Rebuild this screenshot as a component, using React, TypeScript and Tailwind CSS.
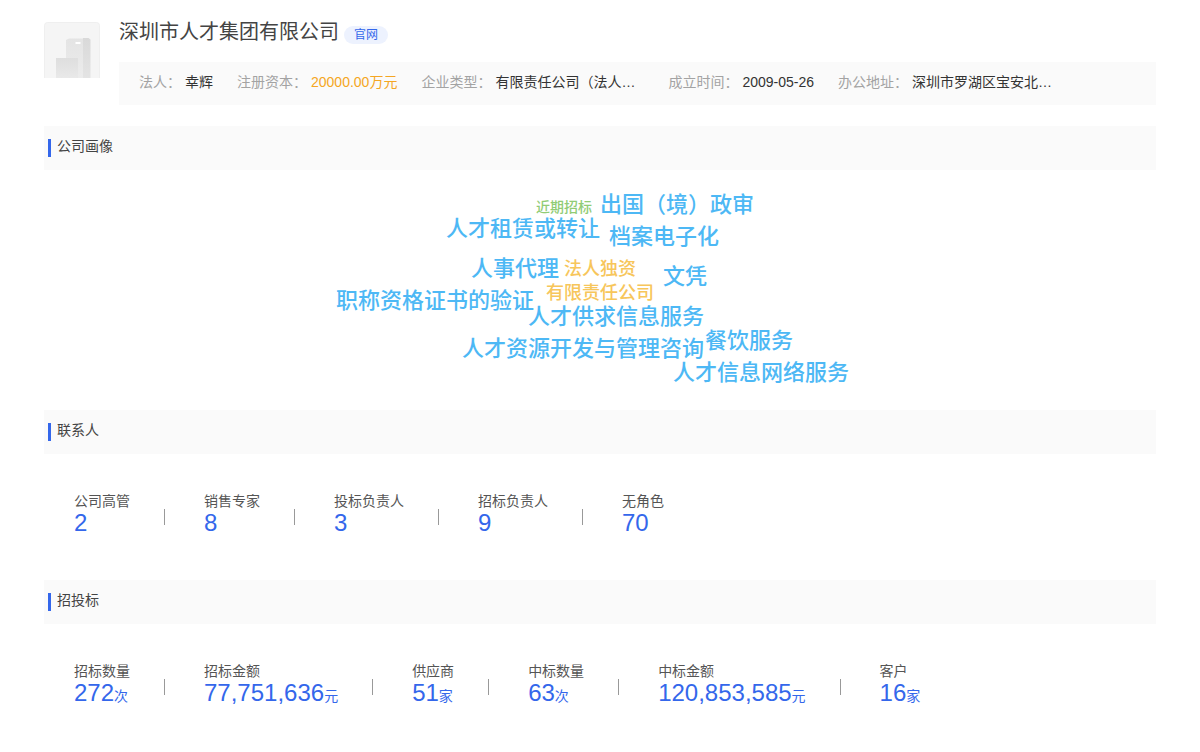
const companyInfo = [
  { label: "法人：", value: "幸辉", className: "text-[#333]" },
  { label: "注册资本：", value: "20000.00万元", className: "text-[#f5a623]" },
  { label: "企业类型：", value: "有限责任公司（法人…", className: "w-[149px] truncate text-[#333]" },
  { label: "成立时间：", value: "2009-05-26", className: "text-[#333]" },
  { label: "办公地址：", value: "深圳市罗湖区宝安北…", className: "w-[149px] truncate text-[#333]" },
];

const words = [
  { text: "近期招标", className: "left-[236px] top-[30px] text-[14px] text-[#91cc75]" },
  { text: "出国（境）政审", className: "left-[300px] top-[24px] text-[22px] text-[#4db8f5]" },
  { text: "人才租赁或转让", className: "left-[146px] top-[48px] text-[22px] text-[#4db8f5]" },
  { text: "档案电子化", className: "left-[309px] top-[56px] text-[22px] text-[#4db8f5]" },
  { text: "人事代理", className: "left-[171px] top-[88px] text-[22px] text-[#4db8f5]" },
  { text: "法人独资", className: "left-[264px] top-[90px] text-[18px] text-[#f7c65b]" },
  { text: "文凭", className: "left-[363px] top-[96px] text-[22px] text-[#4db8f5]" },
  { text: "有限责任公司", className: "left-[246px] top-[114px] text-[18px] text-[#f7c65b]" },
  { text: "职称资格证书的验证", className: "left-[36px] top-[120px] text-[22px] text-[#4db8f5]" },
  { text: "人才供求信息服务", className: "left-[228px] top-[136px] text-[22px] text-[#4db8f5]" },
  { text: "餐饮服务", className: "left-[405px] top-[160px] text-[22px] text-[#4db8f5]" },
  { text: "人才资源开发与管理咨询", className: "left-[162px] top-[168px] text-[22px] text-[#4db8f5]" },
  { text: "人才信息网络服务", className: "left-[373px] top-[192px] text-[22px] text-[#4db8f5]" },
];

const contacts = [
  { label: "公司高管", value: "2" },
  { label: "销售专家", value: "8" },
  { label: "投标负责人", value: "3" },
  { label: "招标负责人", value: "9" },
  { label: "无角色", value: "70" },
];

const bids = [
  { label: "招标数量", value: "272", unit: "次" },
  { label: "招标金额", value: "77,751,636", unit: "元" },
  { label: "供应商", value: "51", unit: "家" },
  { label: "中标数量", value: "63", unit: "次" },
  { label: "中标金额", value: "120,853,585", unit: "元" },
  { label: "客户", value: "16", unit: "家" },
];

function SectionTitle({ children }: { children: React.ReactNode }) {
  return (
    <div className="flex h-11 items-center bg-[#fafafa] pl-1">
      <span className="h-[18px] w-[3px] bg-[#3467eb]" />
      <h2 className="ml-1.5 pb-1 text-sm text-[#444]">{children}</h2>
    </div>
  );
}

function Stats({ items }: { items: { label: string; value: string; unit?: string }[] }) {
  return (
    <ul className="flex h-[126px] items-start pt-9 pl-[30px]">
      {items.map((item, i) => (
        <li key={item.label} className="flex">
          <div>
            <div className="text-sm leading-[22px] text-[#555]">{item.label}</div>
            <div className="text-2xl leading-[22px] text-[#3467eb]">
              {item.value}
              {item.unit && <span className="text-sm leading-none">{item.unit}</span>}
            </div>
          </div>
          {i < items.length - 1 && <span className="mt-[19px] mr-[39px] ml-[34px] h-4 w-px bg-[#999]" />}
        </li>
      ))}
    </ul>
  );
}

function CompanyLogo() {
  return (
    <svg viewBox="0 0 56 56" className="h-14 w-14 shrink-0" aria-hidden="true">
      <defs>
        <linearGradient id="tower" x1="0" y1="0" x2="0" y2="1">
          <stop offset="0" stopColor="#e4e4e4" />
          <stop offset="1" stopColor="#ececec" />
        </linearGradient>
        <linearGradient id="side" x1="0" y1="0" x2="0" y2="1">
          <stop offset="0" stopColor="#d9d9d9" />
          <stop offset="1" stopColor="#e4e4e4" />
        </linearGradient>
        <linearGradient id="annex" x1="0" y1="0" x2="0" y2="1">
          <stop offset="0" stopColor="#dedede" />
          <stop offset="1" stopColor="#e9e9e9" />
        </linearGradient>
      </defs>
      <rect x="0.5" y="0.5" width="55" height="59" rx="3" fill="#f5f5f5" stroke="#efefef" />
      <path d="M22 18l3-1.5h15V56H22z" fill="url(#tower)" />
      <path d="M39 16h5.500l2 1.500V56H39z" fill="url(#side)" />
      <rect x="31.500" y="20" width="5" height="2" fill="#fff" />
      <path d="M12 36h22v20H12z" fill="url(#annex)" />
    </svg>
  );
}

export default function App() {
  return (
    <main className="min-h-screen bg-white px-11 pt-[22px] font-['Liberation_Sans','Noto_Sans_CJK_SC',sans-serif]">
      {/* Header */}
      <header className="flex gap-[19px]">
        <CompanyLogo />
        <div className="min-w-0 flex-1">
          <div className="flex h-10 items-start">
            <h1 className="text-xl leading-5 text-[#444]">深圳市人才集团有限公司</h1>
            <a href="#" className="mt-1 ml-[5px] rounded-full bg-[#edf2fe] px-2.5 text-xs leading-[18px] text-[#3467eb]">
              官网
            </a>
          </div>
          <dl className="flex h-[43px] items-start gap-6 bg-[#fafafa] pt-2.5 pl-5 text-sm">
            {companyInfo.map((info) => (
              <div key={info.label} className="flex gap-1 whitespace-nowrap">
                <dt className="text-[#a3a3a3]">{info.label}</dt>
                <dd className={info.className}>{info.value}</dd>
              </div>
            ))}
          </dl>
        </div>
      </header>

      {/* Company profile */}
      <section className="mt-[21px]">
        <SectionTitle>公司画像</SectionTitle>
        <div className="relative mx-auto h-60 w-[600px]">
          {words.map((word) => (
            <span key={word.text} className={`absolute leading-none font-medium whitespace-nowrap ${word.className}`}>
              {word.text}
            </span>
          ))}
        </div>
      </section>

      {/* Contacts */}
      <section>
        <SectionTitle>联系人</SectionTitle>
        <Stats items={contacts} />
      </section>

      {/* Bidding */}
      <section>
        <SectionTitle>招投标</SectionTitle>
        <Stats items={bids} />
      </section>
    </main>
  );
}
